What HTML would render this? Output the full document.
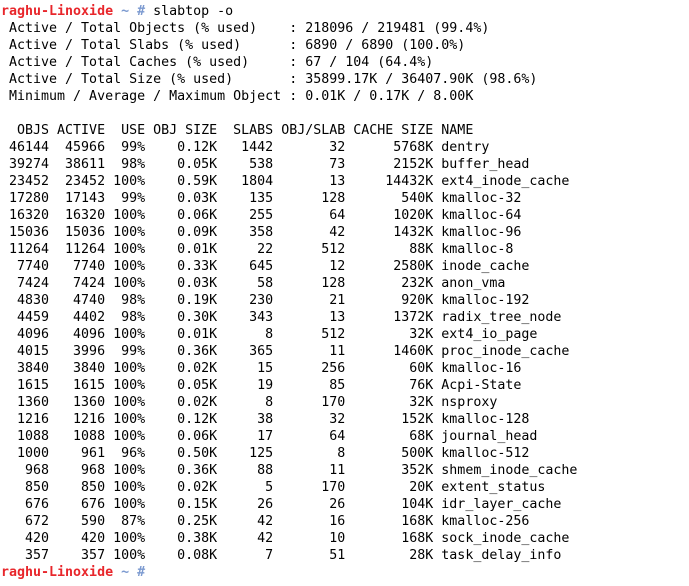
<!DOCTYPE html>
<html><head><meta charset="utf-8"><style>
html,body{margin:0;padding:0;background:#fff;width:689px;height:586px;overflow:hidden}
pre{margin:0;padding:3px 0 0 1px;font-family:"DejaVu Sans Mono","Liberation Mono",monospace;font-size:13.3px;line-height:17px;color:#000}
.r{color:#e8262b;font-weight:bold}.b{color:#7c9ad0;font-weight:bold}
</style></head><body><pre><span class="r">raghu-Linoxide</span> <span class="b">~ #</span> slabtop -o
 Active / Total Objects (% used)    : 218096 / 219481 (99.4%)
 Active / Total Slabs (% used)      : 6890 / 6890 (100.0%)
 Active / Total Caches (% used)     : 67 / 104 (64.4%)
 Active / Total Size (% used)       : 35899.17K / 36407.90K (98.6%)
 Minimum / Average / Maximum Object : 0.01K / 0.17K / 8.00K

  OBJS ACTIVE  USE OBJ SIZE  SLABS OBJ/SLAB CACHE SIZE NAME
 46144  45966  99%    0.12K   1442       32      5768K dentry
 39274  38611  98%    0.05K    538       73      2152K buffer_head
 23452  23452 100%    0.59K   1804       13     14432K ext4_inode_cache
 17280  17143  99%    0.03K    135      128       540K kmalloc-32
 16320  16320 100%    0.06K    255       64      1020K kmalloc-64
 15036  15036 100%    0.09K    358       42      1432K kmalloc-96
 11264  11264 100%    0.01K     22      512        88K kmalloc-8
  7740   7740 100%    0.33K    645       12      2580K inode_cache
  7424   7424 100%    0.03K     58      128       232K anon_vma
  4830   4740  98%    0.19K    230       21       920K kmalloc-192
  4459   4402  98%    0.30K    343       13      1372K radix_tree_node
  4096   4096 100%    0.01K      8      512        32K ext4_io_page
  4015   3996  99%    0.36K    365       11      1460K proc_inode_cache
  3840   3840 100%    0.02K     15      256        60K kmalloc-16
  1615   1615 100%    0.05K     19       85        76K Acpi-State
  1360   1360 100%    0.02K      8      170        32K nsproxy
  1216   1216 100%    0.12K     38       32       152K kmalloc-128
  1088   1088 100%    0.06K     17       64        68K journal_head
  1000    961  96%    0.50K    125        8       500K kmalloc-512
   968    968 100%    0.36K     88       11       352K shmem_inode_cache
   850    850 100%    0.02K      5      170        20K extent_status
   676    676 100%    0.15K     26       26       104K idr_layer_cache
   672    590  87%    0.25K     42       16       168K kmalloc-256
   420    420 100%    0.38K     42       10       168K sock_inode_cache
   357    357 100%    0.08K      7       51        28K task_delay_info
<span class="r">raghu-Linoxide</span> <span class="b">~ #</span></pre></body></html>
